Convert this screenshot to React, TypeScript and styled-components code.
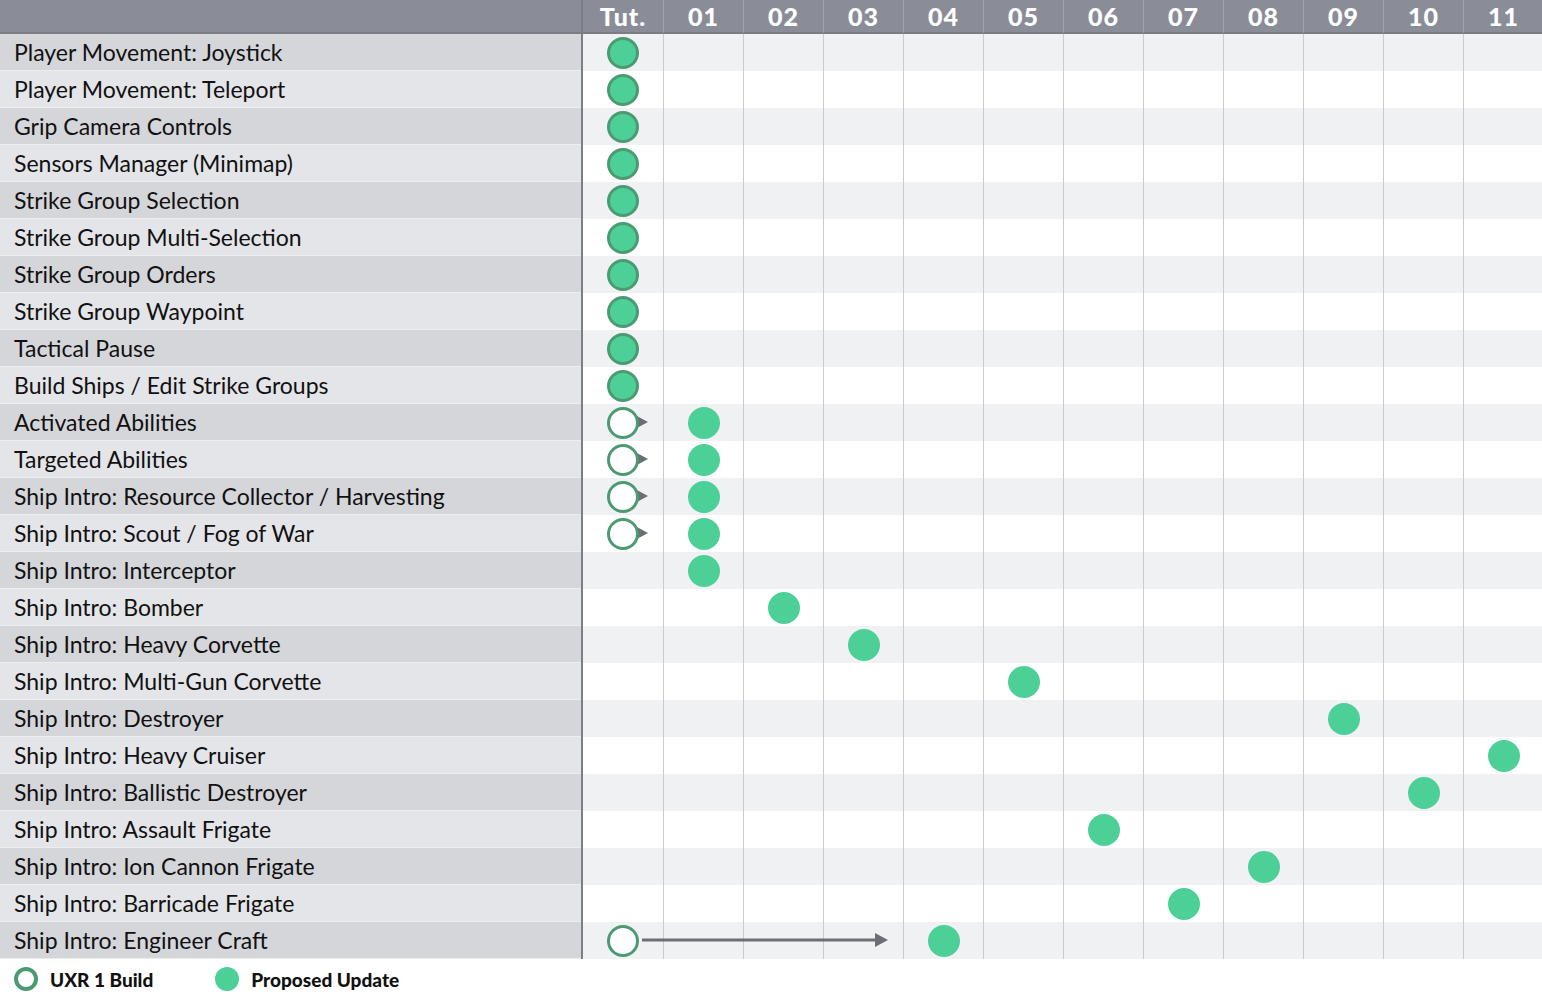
import React from "react";
import styled, { createGlobalStyle } from "styled-components";

const Global = createGlobalStyle`
  body { margin: 0; background: #fff; font-family: Lato, "Noto Sans", sans-serif; }
`;

const LABEL_W = 581;
const COL_W = 80;
const ROW_H = 37;
const GREEN = "#4dcf98";
const DARK = "#4b9a72";

const Page = styled.div`width: 1542px;`;
const Grid = styled.div`
  display: grid;
  grid-template-columns: ${LABEL_W}px 2px repeat(12, ${COL_W}px);
`;
const HeadBar = styled.div`
  display: contents;
`;
const HeadCell = styled.div<{ $first?: boolean }>`
  height: 34px;
  background: #8a8d97;
  border-bottom: 2px solid #7a7d86;
  border-left: ${(p) => (p.$first ? "none" : "1px solid #a0a3ab")};
  color: #fff;
  font-weight: 900;
  font-size: 25px;
  display: flex;
  align-items: center;
  justify-content: center;
  letter-spacing: 1px;
  box-sizing: border-box;
`;
const Divider = styled.div`background: #7b7e86;`;
const Label = styled.div<{ $odd: boolean }>`
  height: ${ROW_H}px;
  background: ${(p) => (p.$odd ? "#e4e5e8" : "#d5d6da")};
  border-bottom: 1px solid #eceded;
  box-sizing: border-box;
  display: flex;
  align-items: center;
  padding-left: 14px;
  font-size: 23px;
  color: #111;
  white-space: nowrap;
`;
const Cell = styled.div<{ $odd: boolean; $first: boolean }>`
  position: relative;
  height: ${ROW_H}px;
  background: ${(p) => (p.$odd ? "#fff" : "#f0f1f3")};
  border-left: ${(p) => (p.$first ? "none" : "1px solid #cacbcd")};
  box-sizing: border-box;
  display: flex;
  align-items: center;
  justify-content: center;
`;
const Dot = styled.div<{ $kind: "tut" | "open" | "new" }>`
  width: 32px;
  height: 32px;
  border-radius: 50%;
  box-sizing: border-box;
  background: ${(p) => (p.$kind === "open" ? "#fff" : GREEN)};
  border: ${(p) => (p.$kind === "new" ? "none" : `3px solid ${DARK}`)};
  position: relative;
  z-index: 2;
`;
const Arrow = styled.svg`
  position: absolute;
  top: 10px;
  left: 59px;
  z-index: 1;
  overflow: visible;
`;
const Legend = styled.div`
  display: flex;
  align-items: center;
  height: 40px;
  padding-left: 14px;
  font-weight: 900;
  font-size: 19px;
  color: #111;
`;
const LegendItem = styled.div`
  display: flex;
  align-items: center;
  gap: 12px;
  margin-right: 62px;
`;
const LDot = styled.div<{ $open?: boolean }>`
  width: 24px;
  height: 24px;
  border-radius: 50%;
  box-sizing: border-box;
  background: ${(p) => (p.$open ? "#fff" : GREEN)};
  border: ${(p) => (p.$open ? `4px solid ${DARK}` : "none")};
`;

type Row = { name: string; col: number; open?: boolean };
const rows: Row[] = [
  { name: "Player Movement: Joystick", col: 0 },
  { name: "Player Movement: Teleport", col: 0 },
  { name: "Grip Camera Controls", col: 0 },
  { name: "Sensors Manager (Minimap)", col: 0 },
  { name: "Strike Group Selection", col: 0 },
  { name: "Strike Group Multi-Selection", col: 0 },
  { name: "Strike Group Orders", col: 0 },
  { name: "Strike Group Waypoint", col: 0 },
  { name: "Tactical Pause", col: 0 },
  { name: "Build Ships / Edit Strike Groups", col: 0 },
  { name: "Activated Abilities", col: 1, open: true },
  { name: "Targeted Abilities", col: 1, open: true },
  { name: "Ship Intro: Resource Collector / Harvesting", col: 1, open: true },
  { name: "Ship Intro: Scout / Fog of War", col: 1, open: true },
  { name: "Ship Intro: Interceptor", col: 1 },
  { name: "Ship Intro: Bomber", col: 2 },
  { name: "Ship Intro: Heavy Corvette", col: 3 },
  { name: "Ship Intro: Multi-Gun Corvette", col: 5 },
  { name: "Ship Intro: Destroyer", col: 9 },
  { name: "Ship Intro: Heavy Cruiser", col: 11 },
  { name: "Ship Intro: Ballistic Destroyer", col: 10 },
  { name: "Ship Intro: Assault Frigate", col: 6 },
  { name: "Ship Intro: Ion Cannon Frigate", col: 8 },
  { name: "Ship Intro: Barricade Frigate", col: 7 },
  { name: "Ship Intro: Engineer Craft", col: 4, open: true },
];
const heads = ["Tut.", "01", "02", "03", "04", "05", "06", "07", "08", "09", "10", "11"];

export default function App() {
  return (
    <Page>
      <Global />
      <Grid>
        <HeadBar>
          <HeadCell $first />
          <Divider />
          {heads.map((h, i) => (
            <HeadCell key={h} $first={i === 0}>{h}</HeadCell>
          ))}
        </HeadBar>
        {rows.map((r, ri) => {
          const odd = ri % 2 === 1;
          const len = r.col * COL_W - 58 - 17;
          return (
            <React.Fragment key={r.name}>
              <Label $odd={odd}>{r.name}</Label>
              <Divider />
              {heads.map((_, ci) => (
                <Cell key={ci} $odd={odd} $first={ci === 0}>
                  {ci === 0 && r.open && <Dot $kind="open" />}
                  {ci === 0 && r.open && (
                    <Arrow width={len + 4} height={16}>
                      <line x1={0} y1={8} x2={len - 10} y2={8} stroke="#6b6e75" strokeWidth={3} />
                      <polygon points={`${len - 12},1 ${len + 1},8 ${len - 12},15`} fill="#6b6e75" />
                    </Arrow>
                  )}
                  {ci === 0 && !r.open && r.col === 0 && <Dot $kind="tut" />}
                  {ci > 0 && ci === r.col && <Dot $kind="new" />}
                </Cell>
              ))}
            </React.Fragment>
          );
        })}
      </Grid>
      <Legend>
        <LegendItem><LDot $open />UXR 1 Build</LegendItem>
        <LegendItem><LDot />Proposed Update</LegendItem>
      </Legend>
    </Page>
  );
}
